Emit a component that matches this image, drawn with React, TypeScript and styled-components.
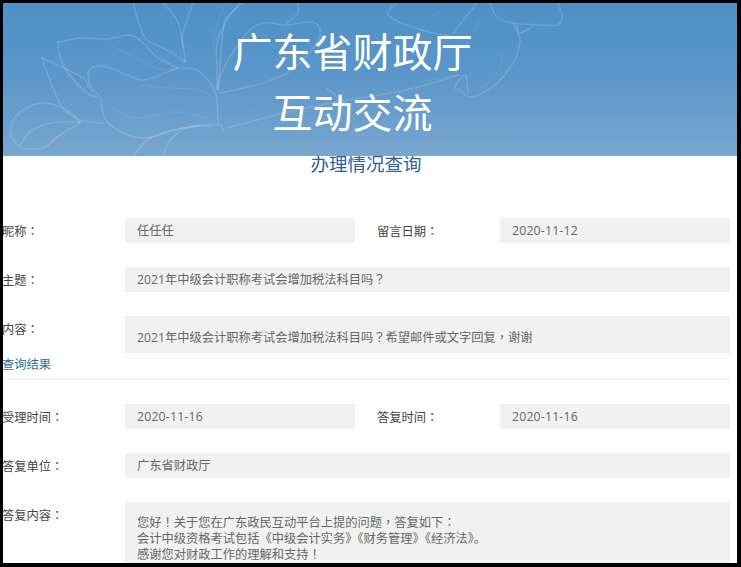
import React from "react";
import styled, { createGlobalStyle } from "styled-components";

const Global = createGlobalStyle`
  html, body { margin: 0; padding: 0; background: #000; }
  body { width: 741px; height: 567px; overflow: hidden; }
  * { box-sizing: border-box; }
`;

const Frame = styled.div`
  width: 741px;
  height: 567px;
  border-style: solid;
  border-color: #000;
  border-width: 3px 4px 4px 3px;
  background: #fff;
  overflow: hidden;
  font-family: "Open Sans", "Noto Sans CJK SC", sans-serif;
`;

const Banner = styled.header`
  position: relative;
  height: 153px;
  background: linear-gradient(180deg, #4f90c5 0%, #5a96c9 45%, #78a6cf 100%);
  overflow: hidden;
  display: flex;
  flex-direction: column;
  align-items: center;
  color: #fff;
  padding-top: 18px;
  padding-right: 35px;
`;

const Flower = styled.svg`
  position: absolute;
  left: 0;
  top: 0;
`;

const TitleLine = styled.div`
  position: relative;
  font-size: 40px;
  line-height: 58px;
  height: 61px;
  font-family: "Noto Sans CJK SC", sans-serif;
  font-weight: 400;
`;

const Heading = styled.h2`
  margin: 0;
  height: 62px;
  text-align: center;
  font-family: "Noto Sans CJK SC", sans-serif;
  font-weight: 400;
  font-size: 18.5px;
  line-height: 15px;
  color: #2f5f96;
  padding-right: 8px;
`;

const Grid = styled.div`
  display: flex;
  flex-direction: column;
  padding-right: 7px;
`;

const Row = styled.div<{ $gap: number }>`
  display: flex;
  margin-bottom: ${(p) => p.$gap}px;
`;

const Label = styled.div<{ $width: number }>`
  flex: 0 0 ${(p) => p.$width}px;
  height: 25px;
  font-size: 12.25px;
  line-height: 27px;
  color: #444;
  white-space: pre;
  text-indent: -1px;
`;

const Punct = styled.span`
  font-family: "Noto Sans CJK TC", sans-serif;
  line-height: 0;
`;

const Value = styled.div<{ $height?: number; $grow?: boolean; $width?: number; $top?: number; $date?: boolean }>`
  ${(p) => (p.$grow ? "flex: 1;" : `flex: 0 0 ${p.$width}px;`)}
  height: ${(p) => p.$height ?? 25}px;
  padding: ${(p) => p.$top ?? 0}px 12px 0 12px;
  background: #f1f1f1;
  font-size: 12.25px;
  line-height: 25px;
  color: #666;
  letter-spacing: ${(p) => (p.$date ? "0.2px" : "0")};
`;

const Spacer = styled.div`
  flex: 0 0 23px;
`;

const ResultLink = styled.div`
  font-size: 12.25px;
  line-height: 20px;
  color: #2f6f9f;
  height: 26px;
  padding-top: 1px;
  margin-top: 1px;
  border-bottom: 1px solid #ececec;
  text-indent: -1px;
`;

const Divided = styled.div`
  padding-top: 24px;
`;

const Reply = styled.div`
  flex: 1;
  height: 80px;
  padding: 13px 12px 0 12px;
  background: #f1f1f1;
  font-size: 12.25px;
  line-height: 16px;
  color: #666;
`;

type P = [number, number];

const curves: P[][] = [
  [[58, 42], [83, 38], [107, 39], [130, 35], [143, 43], [157, 57], [177, 68]],
  [[58, 42], [60, 57], [67, 72], [87, 93], [97, 97]],
  [[88, 72], [93, 67], [107, 67], [127, 75], [143, 80], [160, 75], [177, 68]],
  [[88, 72], [90, 87], [100, 97], [103, 113], [110, 125], [133, 137], [153, 137], [173, 130], [200, 125], [220, 125], [223, 132]],
  [[42, 58], [53, 63], [83, 78], [88, 88]],
  [[42, 58], [50, 80], [62, 107], [80, 120], [103, 123]],
  [[80, 122], [67, 110], [43, 103], [23, 110], [12, 123], [12, 137], [23, 148], [43, 148], [57, 137], [80, 123]],
  [[20, 145], [30, 132], [50, 123], [80, 122]],
  [[133, 3], [140, 27], [147, 40], [163, 48], [178, 57], [185, 62]],
  [[163, 3], [177, 20], [183, 43], [185, 62]],
  [[193, 3], [187, 20], [182, 37], [183, 47]],
  [[177, 68], [197, 70], [213, 87], [217, 100], [218, 123]],
  [[240, 3], [227, 20], [217, 43], [217, 67], [217, 90]],
  [[133, 157], [147, 140], [167, 132], [200, 125]],
  [[163, 157], [170, 140], [187, 128], [213, 126]],
  [[218, 90], [220, 77], [230, 57], [247, 33], [263, 23], [287, 25], [312, 22], [320, 30], [317, 43], [303, 60], [287, 73], [263, 83], [243, 88], [220, 93]],
  [[297, 3], [298, 13], [287, 23]],
  [[243, 3], [227, 17], [223, 33], [218, 90]],
  [[227, 128], [284, 113], [331, 103], [406, 90], [458, 75]],
  [[327, 88], [337, 97], [347, 107]],
  [[397, 3], [388, 12], [395, 20], [422, 30], [453, 37]],
  [[477, 3], [453, 33]],
  [[490, 3], [497, 17], [513, 23], [540, 25], [557, 25], [562, 17], [558, 3]],
  [[513, 23], [520, 40], [513, 63], [497, 83], [473, 97], [460, 90], [455, 87], [465, 75], [468, 93]],
  [[517, 25], [520, 33], [532, 27]],
];

const fineCurves: P[][] = [
  [[110, 45], [130, 55], [155, 68], [175, 70]],
  [[140, 85], [170, 88], [200, 90], [215, 100]],
  [[107, 105], [135, 118], [175, 112], [215, 120]],
  [[60, 55], [72, 78], [85, 95]],
  [[440, 10], [423, 27], [420, 37]],
  [[480, 20], [470, 37], [463, 50]],
  [[503, 53], [497, 73], [477, 93]],
  [[460, 75], [430, 80], [417, 83], [407, 90], [390, 98]],
  [[225, 3], [217, 25], [213, 50]],
];

// Smooth line through a list of points (Catmull-Rom to cubic Bezier).
function smooth(pts: P[]): string {
  let d = `M${pts[0][0]} ${pts[0][1]}`;
  for (let i = 0; i < pts.length - 1; i++) {
    const a = pts[Math.max(i - 1, 0)];
    const b = pts[i];
    const c = pts[i + 1];
    const e = pts[Math.min(i + 2, pts.length - 1)];
    const c1x = b[0] + (c[0] - a[0]) / 6;
    const c1y = b[1] + (c[1] - a[1]) / 6;
    const c2x = c[0] - (e[0] - b[0]) / 6;
    const c2y = c[1] - (e[1] - b[1]) / 6;
    d += ` C${c1x.toFixed(1)} ${c1y.toFixed(1)} ${c2x.toFixed(1)} ${c2y.toFixed(1)} ${c[0]} ${c[1]}`;
  }
  return d;
}

function FlowerArt() {
  return (
    <Flower width="734" height="153" viewBox="3 3 734 153" fill="none" aria-hidden="true">
      <g stroke="#ffffff" strokeOpacity="0.14" strokeWidth="1.6" strokeLinecap="round">
        {curves.map((c, i) => (
          <path key={i} d={smooth(c)} />
        ))}
      </g>
      <g stroke="#ffffff" strokeOpacity="0.08" strokeWidth="1" strokeLinecap="round">
        {fineCurves.map((c, i) => (
          <path key={i} d={smooth(c)} />
        ))}
      </g>
    </Flower>
  );
}

// The reference's full-width punctuation sits centred in its cell, as in the TC forms.
function T({ children }: { children: string }) {
  return (
    <>
      {children.split(/([：？！，])/).map((part, i) =>
        i % 2 ? <Punct key={i}>{part}</Punct> : part
      )}
    </>
  );
}

export default function App() {
  return (
    <Frame>
      <Global />
      <Banner>
        <FlowerArt />
        <TitleLine>广东省财政厅</TitleLine>
        <TitleLine>互动交流</TitleLine>
      </Banner>
      <Heading>办理情况查询</Heading>
      <Grid>
        <Row $gap={24}>
          <Label $width={122}><T>昵称：</T></Label>
          <Value $width={230}>任任任</Value>
          <Spacer />
          <Label $width={122}><T>留言日期：</T></Label>
          <Value $grow $date>2020-11-12</Value>
        </Row>
        <Row $gap={24}>
          <Label $width={122}><T>主题：</T></Label>
          <Value $grow><T>2021年中级会计职称考试会增加税法科目吗？</T></Value>
        </Row>
        <Row $gap={0}>
          <Label $width={122}><T>内容：</T></Label>
          <Value $grow $height={37} $top={9}>
            <T>2021年中级会计职称考试会增加税法科目吗？希望邮件或文字回复，谢谢</T>
          </Value>
        </Row>
        <ResultLink>查询结果</ResultLink>
        <Divided>
          <Row $gap={24}>
            <Label $width={122}><T>受理时间：</T></Label>
            <Value $width={230} $date>2020-11-16</Value>
            <Spacer />
            <Label $width={122}><T>答复时间：</T></Label>
            <Value $grow $date>2020-11-16</Value>
          </Row>
          <Row $gap={24}>
            <Label $width={122}><T>答复单位：</T></Label>
            <Value $grow>广东省财政厅</Value>
          </Row>
          <Row $gap={0}>
            <Label $width={122}><T>答复内容：</T></Label>
            <Reply>
              <T>您好！关于您在广东政民互动平台上提的问题，答复如下：</T>
              <br />
              会计中级资格考试包括《中级会计实务》《财务管理》《经济法》。
              <br />
              <T>感谢您对财政工作的理解和支持！</T>
            </Reply>
          </Row>
        </Divided>
      </Grid>
    </Frame>
  );
}
